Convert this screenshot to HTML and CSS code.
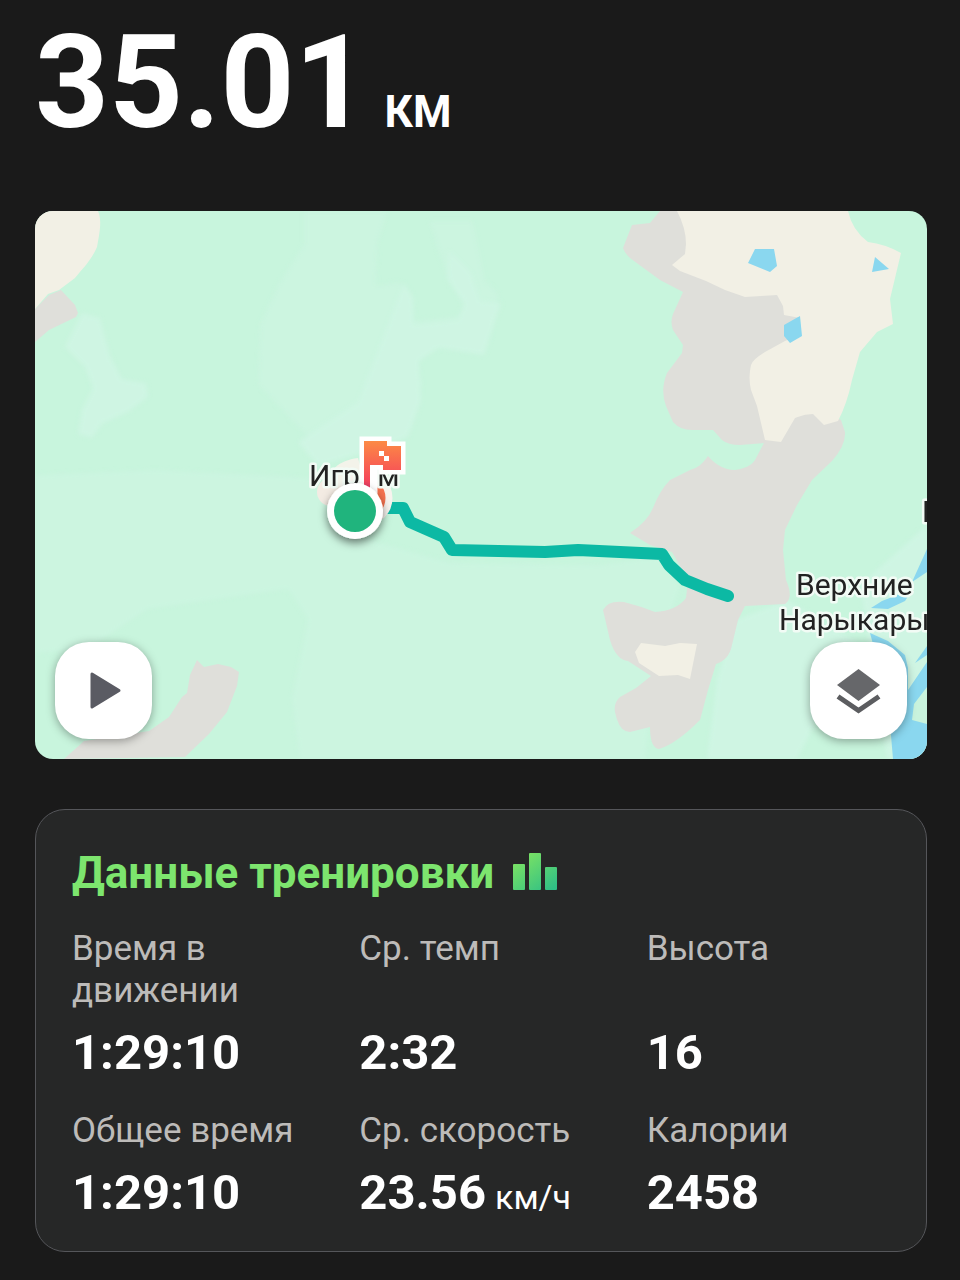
FILE: index.html
```html
<!DOCTYPE html>
<html lang="ru">
<head>
    <meta charset="UTF-8">
    <meta name="viewport" content="width=device-width, initial-scale=1.0">
    <title>Данные тренировки</title>
    <link rel="stylesheet" href="styles.css">
</head>
<body>

    <main class="container">
        <h1 class="distance">35.01 <span class="distance-unit">КМ</span></h1>

        <section class="map" aria-label="Маршрут">
            <svg class="map-canvas" viewBox="35 211 892 548">
                <defs>
                    <linearGradient id="flagFill" x1="0" y1="0" x2="0" y2="1">
                        <stop offset="0" stop-color="#fc8a45"/>
                        <stop offset="0.7" stop-color="#f6475a"/>
                        <stop offset="1" stop-color="#c9307c"/>
                    </linearGradient>
                    <filter id="pinShadow" x="-50%" y="-50%" width="200%" height="200%">
                        <feDropShadow dx="0" dy="4" stdDeviation="4" flood-color="#000" flood-opacity="0.5"/>
                    </filter>
                    <filter id="soft">
                        <feGaussianBlur stdDeviation="2"/>
                    </filter>
                </defs>

                <!-- forest -->
                <rect x="35" y="211" width="892" height="548" fill="#c8f5dd"/>
                <g fill="#cff5e3" filter="url(#soft)">
                    <path d="M82 313l18 5 10 38 12 23 24 4 2 14-20 15-26 12-10 14-14-4 4-24 11-22-8-21-20-20z"/>
                    <path d="M304 211h84l-10 30-2 45 22-4 12 10 3 29 45-5 8-14-17-20-20-61 44 0 12 60 14 13-14 48-20 5-40-10-17 5 14 40-10 42-28 26-50 6-34-27-42-45 2-60 20-42 24-38z" opacity="0.5"/>
                    <path d="M404 283l9 14 1 28 44-5 6-16-17-25 2-28 22 22 9 28 21 2-17 52-45-7-20 13 2 40-13 36-30 12-60 17-20-24 60-40z"/>
                    <path d="M35 475l120-5 160 8 30 55 105 30 150 2 60-8 20 30-25 75-10 97H300l-8-60 16-80-20-30-140 20-60 40-53 4z" opacity="0.6"/>
                    <path d="M735 620l52-20 70 42-60 117h-90l10-80z"/>
                    <path d="M860 585l67-60v234h-40z"/>
                </g>

                <!-- settlements and bare ground -->
                <g class="ground">
                    <path d="M35 309l14-14 12-5 14 15 3 8-2 4-27 13-14 12z"/>
                    <path d="M660 211L650 223 632 225 623 248Q626 256 634 261L660 280 683 292 673 314Q670 322 673 330L683 345 682 353 667 373Q660 390 666 406L673 422Q680 430 692 430L713 430 722 440Q728 445 740 445L765 443 800 400 800 300 700 211z"/>
                    <path d="M765 441L755 460Q750 468 735 470 720 470 708 456 700 468 690 470L670 480Q660 490 653 508 647 522 630 533L650 545 672 552 688 580 686 598Q676 611 655 612 640 606 624 602 608 600 603 610L610 640Q616 660 628 661L651 676 636 688 620 697Q612 704 616 716 620 732 630 732L650 727Q650 748 659 749 676 744 700 720L708 690 716 664Q729 660 732 645L738 620 745 606 785 604Q794 598 786 580L783 550 785 530 797 505 812 480 832 461Q846 445 845 432L841 420 810 405z"/>
                    <path d="M64 759l20-18 65-10 20-14 13-20 5-4 3-18 7-15 7 7 14-3 13 3 8 5-2 14-10 26-18 22-24 23z"/>
                </g>

                <!-- fields -->
                <g class="field">
                    <path d="M35 211h63c4 9 2 20-1 36-6 14-15 22-22 31l-16 12-11 4-13 15z"/>
                    <path d="M677 211Q686 228 686 244L685 254 672 265 680 271 706 281 725 290 745 297 777 295 783 306 784 315 800 318 801 334 785 341 765 352Q752 360 751 365 748 378 751 390L757 406 765 440 781 442 795 418Q804 414 813 414L824 425 838 421Q847 404 852 380L860 352 877 332 893 324 890 299 901 253Q885 244 868 242 852 230 848 211z"/>
                    <path d="M641 643l24 3 15-3 17 1-7 35-12-4-19 1-20-13-4-11z"/>
                </g>

                <!-- lakes and river -->
                <g class="water">
                    <path d="M755 249h19l3 17-7 6-22-9zM875 257l14 12-17 3zM784 325l16-9 2 20-12 7-6-7z"/>
                    <path d="M927 549L912 582 927 572z"/>
                    <path d="M871 608L882 601 913 589 905 601 888 609z"/>
                    <path d="M870 633L888 641 905 655 908 668 908 690 927 662V759H893L888 700z"/>
                    <path d="M927 646L915 663 927 655z"/>
                </g>
                <path d="M927 687L914 704 912 720 927 724z" fill="#c9f3dd"/>

                <polyline class="route" points="380,508 403,508 410,522 444,537 452,550 545,552 578,550 662,554 669,565 685,580 707,589 728,596"/>

                <!-- town area under the label -->
                <circle cx="331" cy="492" r="14" fill="#f3ebe3"/>
                <path d="M330 474c5-9 14-14 28-16l6 22-30 8z" fill="#f3f3ea"/>

                <!-- finish -->
                <circle cx="365" cy="498" r="24" fill="#f4714f" stroke="#f7f3ee" stroke-width="7"/>

                <text class="place" x="309" y="486">Игрим</text>
                <text class="place" x="796" y="595">Верхние</text>
                <text class="place" x="779" y="630">Нарыкары</text>
                <text class="place" x="922" y="522">Н</text>

                <path class="flag-outline" d="M364 441h23v5h14v24h-18v-5h-10v32h-9z"/>
                <path fill="url(#flagFill)" d="M364 441h23v5h14v24h-18v-5h-13v32h-6z"/>
                <path fill="#fff" d="M379 451h5v5h5v5h-5v-5h-5z"/>

                <!-- start -->
                <circle cx="355" cy="511" r="28" fill="#fff" filter="url(#pinShadow)"/>
                <circle cx="355" cy="511" r="21" fill="#20b47d"/>
            </svg>

            <button class="map-button play" type="button" aria-label="Воспроизвести маршрут">
                <svg width="49" height="49" viewBox="0 0 49 49">
                    <path d="M13 8v33l27-16.500z" fill="#5a5b63" stroke="#5a5b63" stroke-width="3" stroke-linejoin="round"/>
                </svg>
            </button>
            <button class="map-button layers" type="button" aria-label="Слои карты">
                <svg width="49" height="49" viewBox="0 0 49 49">
                    <path d="M24.500 3L46 19 24.500 35 3 19z" fill="#66676a"/>
                    <path d="M4 30.500L24.500 44.500 45 30.500" fill="none" stroke="#5c5d60" stroke-width="5"/>
                </svg>
            </button>
        </section>

        <section class="card">
            <h2 class="card-title">
                Данные тренировки
                <svg width="46" height="40" viewBox="0 0 46 40" aria-hidden="true">
                    <defs>
                        <linearGradient id="bars" gradientUnits="userSpaceOnUse" x1="6" y1="0" x2="36" y2="40">
                            <stop offset="0" stop-color="#83e660"/>
                            <stop offset="1" stop-color="#2fbf86"/>
                        </linearGradient>
                    </defs>
                    <g fill="url(#bars)">
                        <rect x="1" y="11" width="12" height="26" rx="1"/>
                        <rect x="17" y="0" width="12" height="37" rx="1"/>
                        <rect x="33" y="14" width="12" height="23" rx="1"/>
                    </g>
                </svg>
            </h2>

            <dl class="stats">
                <div class="stat">
                    <dt>Время в движении</dt>
                    <dd>1:29:10</dd>
                </div>
                <div class="stat">
                    <dt>Ср. темп</dt>
                    <dd>2:32</dd>
                </div>
                <div class="stat">
                    <dt>Высота</dt>
                    <dd>16</dd>
                </div>
                <div class="stat">
                    <dt>Общее время</dt>
                    <dd>1:29:10</dd>
                </div>
                <div class="stat">
                    <dt>Ср. скорость</dt>
                    <dd class="with-unit">23.56 <span class="unit">км/ч</span></dd>
                </div>
                <div class="stat">
                    <dt>Калории</dt>
                    <dd>2458</dd>
                </div>
            </dl>
        </section>
    </main>

</body>
</html>
```

FILE: styles.css
```css
* {
    box-sizing: border-box;
}
body {
    margin: 0;
    font-family: Roboto, sans-serif;
    background-color: #1a1a1a;
    color: #fff;
}
.container {
    padding: 0 33px 28px 35px;
}
.distance {
    margin: 0 0 45px;
    font-size: 129px;
    line-height: 166px;
    font-weight: 700;
    display: flex;
    align-items: baseline;
    gap: 16px;
}
.distance-unit {
    font-size: 44px;
    line-height: 1;
}
.map {
    position: relative;
    margin-bottom: 50px;
    border-radius: 18px;
    overflow: hidden;
}
.map-canvas {
    display: block;
    width: 100%;
}
.ground {
    fill: #dfdfda;
}
.field {
    fill: #f2f0e5;
}
.water {
    fill: #8ad7ef;
}
.route {
    fill: none;
    stroke: #0cb9a4;
    stroke-width: 12px;
    stroke-linecap: round;
    stroke-linejoin: round;
}
.place {
    font-size: 30px;
    fill: #222;
    stroke: #f2fbf5;
    stroke-width: 5px;
    stroke-linejoin: round;
    paint-order: stroke;
}
.flag-outline {
    fill: #fff;
    stroke: #fff;
    stroke-width: 9px;
}
.map-button {
    position: absolute;
    bottom: 20px;
    width: 97px;
    height: 97px;
    padding: 0;
    display: flex;
    align-items: center;
    justify-content: center;
    background: #fff;
    border: none;
    border-radius: 34px;
    box-shadow: 0 2px 10px rgba(0, 0, 0, 0.35);
    cursor: pointer;
}
.play {
    left: 20px;
}
.layers {
    right: 20px;
}
.card {
    padding: 37px 16px 28px 36px;
    background: #262727;
    border: 1px solid #55565a;
    border-radius: 30px;
}
.card-title {
    display: flex;
    align-items: center;
    gap: 18px;
    margin: 0 0 29px;
    font-size: 44px;
    line-height: 52px;
    font-weight: 700;
    color: #7de56e;
}
.stats {
    display: grid;
    grid-template-columns: repeat(3, 1fr);
    gap: 27px 24px;
    margin: 0;
}
.stat {
    display: flex;
    flex-direction: column;
    justify-content: space-between;
    gap: 11px;
}
.stat dt {
    font-size: 35px;
    line-height: 42px;
    font-weight: 400;
    color: #bdbbb9;
}
.stat dd {
    margin: 0;
    font-size: 49px;
    line-height: 60px;
    font-weight: 700;
}
.stat .with-unit {
    display: flex;
    align-items: baseline;
    gap: 9px;
}
.unit {
    font-size: 34px;
    line-height: 1;
    font-weight: 400;
}
```
